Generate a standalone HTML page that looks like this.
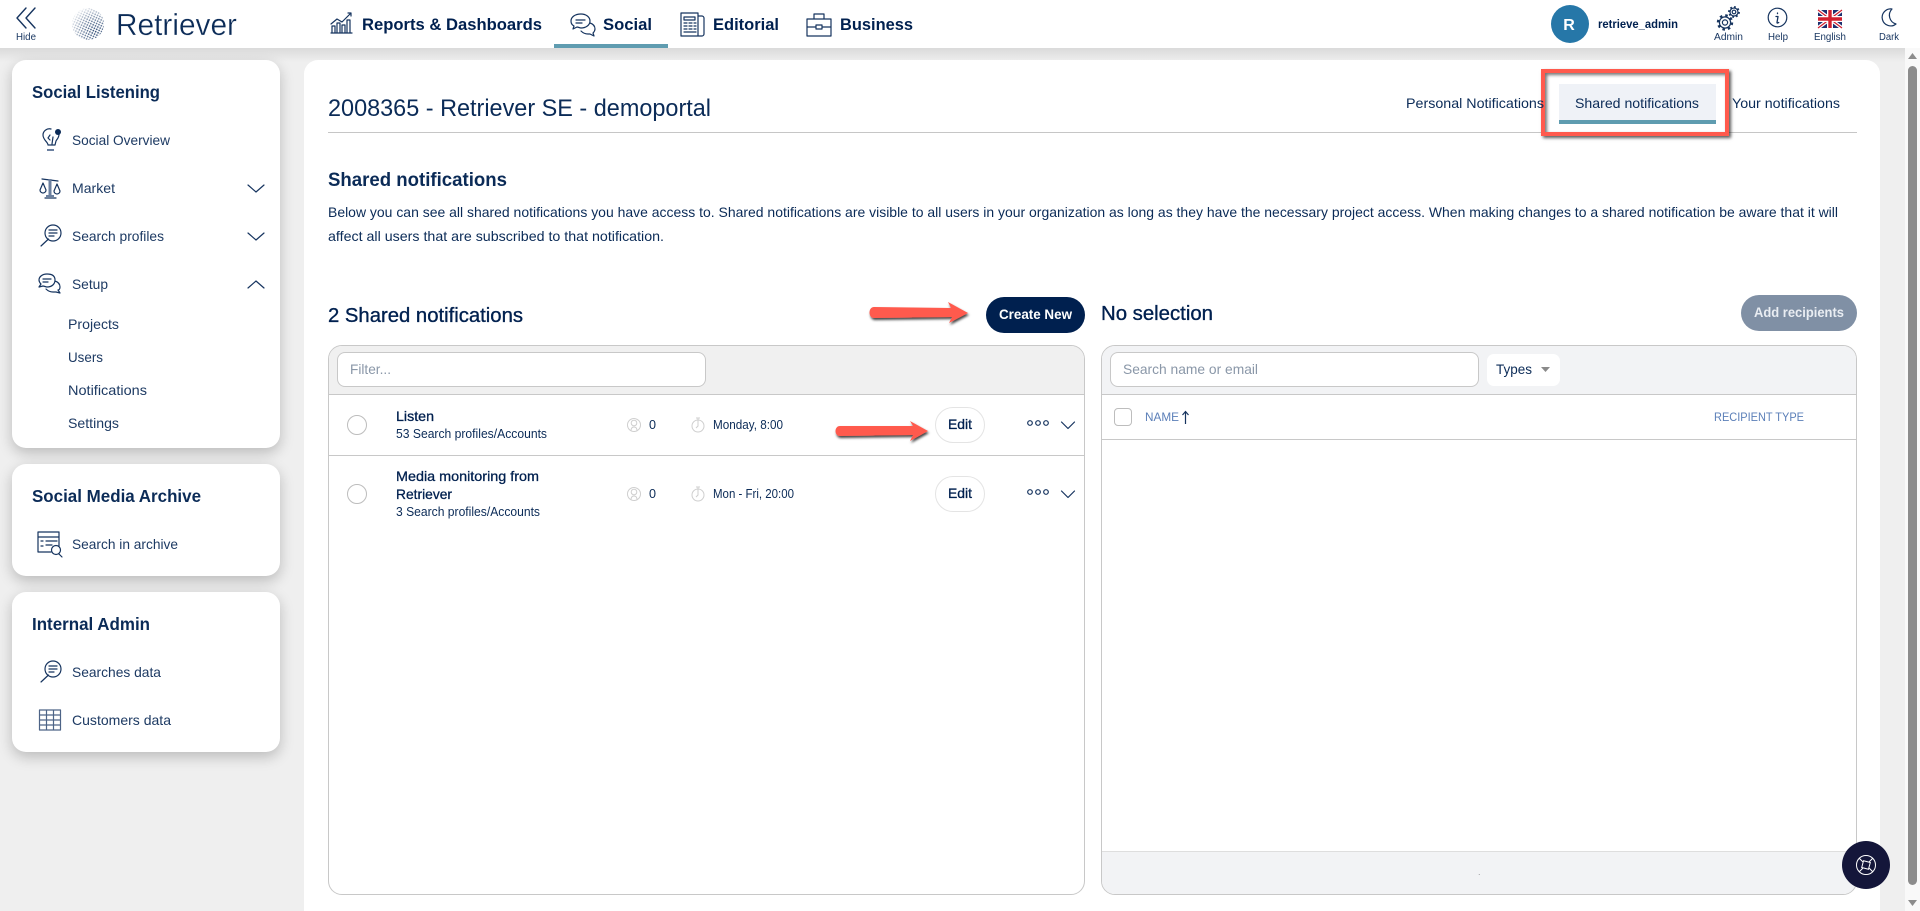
<!DOCTYPE html>
<html lang="en"><head><meta charset="utf-8"><title>Retriever</title>
<style>
html,body{margin:0;padding:0;width:1920px;height:911px;overflow:hidden;background:#efefef;font-family:"Liberation Sans",sans-serif}
#root{position:relative;width:1920px;height:911px;overflow:hidden}
.a{position:absolute;box-sizing:border-box}
.card{background:#fff;border-radius:14px;box-shadow:0 5px 14px rgba(0,0,0,.22);left:12px;width:268px}
svg{position:absolute;left:0;top:0}
text{font-family:"Liberation Sans",sans-serif}
.ic{fill:none;stroke:#16345f;stroke-width:1.2;stroke-linecap:round;stroke-linejoin:round}
</style></head><body><div id="root">
<div class="a" style="left:0;top:48px;width:1920px;height:14px;background:linear-gradient(#dadada,#efefef)"></div>
<div class="a" style="left:0;top:0;width:1920px;height:48px;background:#fff"></div>
<div class="a" style="left:554px;top:44px;width:114px;height:4px;background:#5f9cb0"></div>
<div class="a" style="left:1551px;top:5px;width:38px;height:38px;border-radius:50%;background:#2677a8"></div>
<div class="a card" style="top:60px;height:388px"></div>
<div class="a card" style="top:464px;height:112px"></div>
<div class="a card" style="top:592px;height:160px"></div>
<div class="a" style="left:304px;top:60px;width:1576px;height:851px;background:#fff;border-radius:14px 14px 0 0"></div>
<div class="a" style="left:328px;top:132px;width:1529px;height:1px;background:#c6c6c6"></div>
<div class="a" style="left:1559px;top:84px;width:157px;height:40px;background:#eff2f7;border-bottom:4px solid #5f9cb0"></div>
<div class="a" style="left:1541px;top:69px;width:188px;height:67px;border:4px solid #ff5a4d;box-shadow:2px 2px 3px rgba(0,0,0,.65),inset 2px 2px 3px rgba(0,0,0,.55)"></div>
<div class="a" style="left:328px;top:345px;width:757px;height:550px;border:1px solid #c8c8c8;border-radius:14px;overflow:hidden">
 <div class="a" style="left:0;top:0;width:755px;height:49px;background:#f0f0f0;border-bottom:1px solid #c8c8c8"></div>
 <div class="a" style="left:0;top:109px;width:755px;height:1px;background:#c8c8c8"></div>
</div>
<div class="a" style="left:337px;top:352px;width:369px;height:35px;background:#fff;border:1px solid #c8c8c8;border-radius:8px"></div>
<div class="a" style="left:347px;top:415px;width:20px;height:20px;border:1px solid #bdbdbd;border-radius:50%"></div>
<div class="a" style="left:347px;top:484px;width:20px;height:20px;border:1px solid #bdbdbd;border-radius:50%"></div>
<div class="a" style="left:935px;top:407px;width:50px;height:36px;background:#fff;border:1px solid #e4e4e4;border-radius:18px"></div>
<div class="a" style="left:935px;top:476px;width:50px;height:36px;background:#fff;border:1px solid #e4e4e4;border-radius:18px"></div>
<div class="a" style="left:986px;top:297px;width:99px;height:36px;background:#00204f;border-radius:18px"></div>
<div class="a" style="left:1741px;top:295px;width:116px;height:36px;background:#8090a5;border-radius:18px"></div>
<div class="a" style="left:1101px;top:345px;width:756px;height:550px;border:1px solid #c8c8c8;border-radius:14px;overflow:hidden">
 <div class="a" style="left:0;top:0;width:754px;height:49px;background:#f2f3f5;border-bottom:1px solid #c8c8c8"></div>
 <div class="a" style="left:0;top:93px;width:754px;height:1px;background:#c8c8c8"></div>
 <div class="a" style="left:0;top:505px;width:754px;height:43px;background:#f2f3f5;border-top:1px solid #dedede"></div>
</div>
<div class="a" style="left:1110px;top:352px;width:369px;height:35px;background:#fff;border:1px solid #c8c8c8;border-radius:8px"></div>
<div class="a" style="left:1487px;top:354px;width:73px;height:32px;background:#fff;border-radius:7px"></div>
<div class="a" style="left:1114px;top:408px;width:18px;height:18px;background:#fff;border:1px solid #bdbdbd;border-radius:4px"></div>
<div class="a" style="left:1905px;top:48px;width:15px;height:863px;background:#f9f9f9"></div>
<div class="a" style="left:1908px;top:66px;width:9px;height:819px;background:#8c8c8c;border-radius:5px"></div>
<div class="a" style="left:1842px;top:841px;width:48px;height:48px;border-radius:50%;background:#14163a"></div>

<svg width="1920" height="911" viewBox="0 0 1920 911" xmlns="http://www.w3.org/2000/svg">
<defs>
<pattern id="dots" width="2.600" height="2.600" patternUnits="userSpaceOnUse" patternTransform="rotate(25)"><circle cx="1.300" cy="1.300" r=".85" fill="#24426e"/></pattern>
<radialGradient id="fade" cx=".72" cy=".72" r=".85"><stop offset="0" stop-color="#fff"/><stop offset=".5" stop-color="#999"/><stop offset="1" stop-color="#080808"/></radialGradient>
<mask id="m"><circle cx="88" cy="24" r="16" fill="url(#fade)"/></mask>
<filter id="sh" x="-10%" y="-50%" width="120%" height="220%"><feDropShadow dx="1" dy="2" stdDeviation="1.2" flood-color="#000" flood-opacity=".75"/></filter>
</defs>

<!-- header -->
<path class="ic" d="M26 8 17 18l9 10M35 8 26 18l9 10" style="stroke-width:1.4"/>
<text x="16" y="40" font-size="10" fill="#16345f" textLength="20" lengthAdjust="spacingAndGlyphs">Hide</text>
<rect x="70" y="6" width="38" height="36" fill="url(#dots)" mask="url(#m)"/>
<text x="116" y="35" font-size="31" fill="#0b2b57" stroke="#fff" stroke-width=".35" textLength="121" lengthAdjust="spacingAndGlyphs">Retriever</text>

<g class="ic">
<path d="M331 33h21M332 33v-7h3v7M337 33v-10h3v10M342 33v-8h3v8M347 33v-13h3v13M331 24l6-5 5 3 9-9M348 13h3v3"/>
<path d="M581 14c-6 0-10 3-10 7 0 2 1 4 3 5l-1 3 4-2c1 0 3 1 4 1 5 0 9-3 9-7s-4-7-9-7zM576 20h9M576 23h6M590 23c3 1 5 3 5 6 0 2-1 3-2 4l1 3-4-2-2 0c-3 0-5-1-7-3"/>
<path d="M681 13h17v23h-17zM698 16h4c1 0 2 1 2 2v16c0 1-1 2-2 2h-4M684 17h11v3h-11zM684 23h3M689 23h3M694 23h2M684 26h3M689 26h3M694 26h2M684 29h3M689 29h3M694 29h2M684 32h12"/>
<path d="M807 19h24v17h-24zM814 19v-5h10v5M807 27h9M822 27h9M816 25h6v4h-6z"/>
<circle cx="1725" cy="22.500" r="2.600"/>
<circle cx="1725" cy="22.500" r="5.600"/>
<circle cx="1725" cy="22.500" r="7" style="stroke-width:2.400;stroke-dasharray:2.500 3;stroke-linecap:butt"/>
<circle cx="1734" cy="12" r="1.800"/>
<circle cx="1734" cy="12" r="4"/>
<circle cx="1734" cy="12" r="5" style="stroke-width:1.800;stroke-dasharray:1.800 2.100;stroke-linecap:butt"/>
<circle cx="1777.500" cy="17.500" r="9.300"/>
<path d="M1777.500 13v.6M1776 16.500h2l-1 6 .2.6 1.500-.6" style="stroke-width:1.300"/>
<path d="M1892 9a8.500 8.500 0 1 0 4 15 9 9 0 0 1-4-15z"/>
</g>
<rect x="1818" y="10" width="24" height="18" fill="#1d2f6f"/>
<path d="M1818 10l24 18M1842 10l-24 18" stroke="#fff" stroke-width="3.600"/>
<path d="M1818 10l24 18M1842 10l-24 18" stroke="#d2202f" stroke-width="1.200"/>
<path d="M1830 10v18M1818 19h24" stroke="#fff" stroke-width="6"/>
<path d="M1830 10v18M1818 19h24" stroke="#d2202f" stroke-width="3.400"/>

<g font-size="16.500" font-weight="700" fill="#00204f">
<text x="362" y="30" textLength="180" lengthAdjust="spacingAndGlyphs">Reports &amp; Dashboards</text>
<text x="603" y="30" textLength="49" lengthAdjust="spacingAndGlyphs">Social</text>
<text x="713" y="30" textLength="66" lengthAdjust="spacingAndGlyphs">Editorial</text>
<text x="840" y="30" textLength="73" lengthAdjust="spacingAndGlyphs">Business</text>
</g>
<text x="1569" y="30" font-size="16" font-weight="700" fill="#fff" text-anchor="middle">R</text>
<text x="1598" y="28" font-size="11.500" font-weight="700" fill="#00204f" textLength="80" lengthAdjust="spacingAndGlyphs">retrieve_admin</text>
<g font-size="10" fill="#16345f">
<text x="1714" y="40" textLength="29" lengthAdjust="spacingAndGlyphs">Admin</text>
<text x="1768" y="40" textLength="20" lengthAdjust="spacingAndGlyphs">Help</text>
<text x="1814" y="40" textLength="32" lengthAdjust="spacingAndGlyphs">English</text>
<text x="1879" y="40" textLength="20" lengthAdjust="spacingAndGlyphs">Dark</text>
</g>

<!-- sidebar -->
<g font-size="17.500" font-weight="700" fill="#0b2b57">
<text x="32" y="98" textLength="128" lengthAdjust="spacingAndGlyphs">Social Listening</text>
<text x="32" y="502" textLength="169" lengthAdjust="spacingAndGlyphs">Social Media Archive</text>
<text x="32" y="630" textLength="118" lengthAdjust="spacingAndGlyphs">Internal Admin</text>
</g>
<g font-size="14" fill="#1d3a63">
<text x="72" y="145" textLength="98" lengthAdjust="spacingAndGlyphs">Social Overview</text>
<text x="72" y="193" textLength="43" lengthAdjust="spacingAndGlyphs">Market</text>
<text x="72" y="241" textLength="92" lengthAdjust="spacingAndGlyphs">Search profiles</text>
<text x="72" y="289" textLength="36" lengthAdjust="spacingAndGlyphs">Setup</text>
<text x="68" y="329" textLength="51" lengthAdjust="spacingAndGlyphs">Projects</text>
<text x="68" y="362" textLength="35" lengthAdjust="spacingAndGlyphs">Users</text>
<text x="68" y="395" textLength="79" lengthAdjust="spacingAndGlyphs">Notifications</text>
<text x="68" y="428" textLength="51" lengthAdjust="spacingAndGlyphs">Settings</text>
<text x="72" y="549" textLength="106" lengthAdjust="spacingAndGlyphs">Search in archive</text>
<text x="72" y="677" textLength="89" lengthAdjust="spacingAndGlyphs">Searches data</text>
<text x="72" y="725" textLength="99" lengthAdjust="spacingAndGlyphs">Customers data</text>
</g>
<g class="ic">
<path d="M248 185l8 7 8-7M248 233l8 7 8-7M248 288l8-7 8 7"/>
<path d="M48 145c0-3-5-5-5-10 0-4 4-7 8-6M55 145l1-4c1-2 3-3 3-7M48 145h7M50 135l-2 3 2 2M53 137l-1 7"/>
<path d="M40 190l3-7 3 7a3 3 0 0 1-6 0zM54 191l3-7 3 7a3 3 0 0 1-6 0zM42 179l8 1 8 1M45 198h11"/>
<path d="M41 246l7.500-7"/>
<circle cx="53" cy="233" r="8"/>
<path d="M49 230h8M49 233h8M49 236h5"/>
<path d="M47 274c-5 0-8 3-8 6 0 2 1 3 2 4l-2 3 4-1c1 0 3 1 4 1 5 0 8-3 8-7s-3-6-8-6zM43 279h8M43 282h5M55 281c3 1 5 3 5 6 0 2-1 3-2 3l2 3-4-1h-3c-3 0-5-1-7-3"/>
<path d="M38 532h21v14M38 532v20h13M38 537h21M46 541h11M46 545h6M41 541h2M41 546h2"/>
<circle cx="56" cy="550" r="4.500"/><path d="M59 554l3 3"/>
<path d="M41 682l7.500-7"/>
<circle cx="53" cy="669" r="8"/>
<path d="M49 666h8M49 669h8M49 672h5"/>
<path d="M39.500 710h21v20h-21zM39.500 715h21M39.500 720h21M39.500 725h21M46.500 710v20M53.500 710v20" stroke="#4d6487"/>
</g>
<path d="M50 179v18" stroke="#6b80a0" stroke-width="3"/>
<path d="M46 197h8v-2h-8zM47 151h7v-2h-7z" fill="#6b80a0"/>
<circle cx="58" cy="132" r="3" fill="#0b2b57"/>

<!-- content -->
<text x="328" y="116" font-size="24" fill="#0b2b57" textLength="383" lengthAdjust="spacingAndGlyphs">2008365 - Retriever SE - demoportal</text>
<g font-size="14" fill="#0b2b57">
<text x="1406" y="108" textLength="138" lengthAdjust="spacingAndGlyphs">Personal Notifications</text>
<text x="1575" y="108" textLength="124" lengthAdjust="spacingAndGlyphs">Shared notifications</text>
<text x="1732" y="108" textLength="108" lengthAdjust="spacingAndGlyphs">Your notifications</text>
</g>
<text x="328" y="186" font-size="19.500" font-weight="700" fill="#0b2b57" textLength="179" lengthAdjust="spacingAndGlyphs">Shared notifications</text>
<g font-size="14" fill="#0b2b57">
<text x="328" y="217" textLength="1510" lengthAdjust="spacingAndGlyphs">Below you can see all shared notifications you have access to. Shared notifications are visible to all users in your organization as long as they have the necessary project access. When making changes to a shared notification be aware that it will</text>
<text x="328" y="241" textLength="336" lengthAdjust="spacingAndGlyphs">affect all users that are subscribed to that notification.</text>
</g>
<text x="328" y="322" font-size="20" font-weight="400" fill="#00204f" stroke="#00204f" stroke-width=".35" textLength="195" lengthAdjust="spacingAndGlyphs">2 Shared notifications</text>
<text x="1101" y="320" font-size="20" fill="#00204f" stroke="#00204f" stroke-width=".35" textLength="112" lengthAdjust="spacingAndGlyphs">No selection</text>
<text x="999" y="319" font-size="14" font-weight="700" fill="#fff" textLength="73" lengthAdjust="spacingAndGlyphs">Create New</text>
<text x="1754" y="317" font-size="14" font-weight="700" fill="#e9edf2" textLength="90" lengthAdjust="spacingAndGlyphs">Add recipients</text>

<text x="350" y="374" font-size="14" fill="#8a97a8" textLength="41" lengthAdjust="spacingAndGlyphs">Filter...</text>
<text x="1123" y="374" font-size="14" fill="#8a97a8" textLength="135" lengthAdjust="spacingAndGlyphs">Search name or email</text>
<text x="1496" y="374" font-size="14" fill="#0b2b57" textLength="36" lengthAdjust="spacingAndGlyphs">Types</text>
<path d="M1541 367h9l-4.500 5z" fill="#8a8a8a"/>
<g font-size="12" fill="#5b7fb8">
<text x="1145" y="421" textLength="34" lengthAdjust="spacingAndGlyphs">NAME</text>
<text x="1714" y="421" textLength="90" lengthAdjust="spacingAndGlyphs">RECIPIENT TYPE</text>
</g>
<path d="M1185.500 424v-12M1182.500 415l3-3.500 3 3.500" fill="none" stroke="#16345f" stroke-width="1.200"/>

<g font-size="14" fill="#00204f">
<text x="396" y="421" font-weight="400" stroke="#00204f" stroke-width=".3" textLength="38" lengthAdjust="spacingAndGlyphs">Listen</text>
<text x="396" y="481" stroke="#00204f" stroke-width=".3" textLength="143" lengthAdjust="spacingAndGlyphs">Media monitoring from</text>
<text x="396" y="499" stroke="#00204f" stroke-width=".3" textLength="56" lengthAdjust="spacingAndGlyphs">Retriever</text>
</g>
<g font-size="12.500" fill="#0b2b57">
<text x="396" y="438" textLength="151" lengthAdjust="spacingAndGlyphs">53 Search profiles/Accounts</text>
<text x="396" y="516" textLength="144" lengthAdjust="spacingAndGlyphs">3 Search profiles/Accounts</text>
<text x="649" y="429" textLength="7" lengthAdjust="spacingAndGlyphs">0</text>
<text x="649" y="498" textLength="7" lengthAdjust="spacingAndGlyphs">0</text>
<text x="713" y="429" textLength="70" lengthAdjust="spacingAndGlyphs">Monday, 8:00</text>
<text x="713" y="498" textLength="81" lengthAdjust="spacingAndGlyphs">Mon - Fri, 20:00</text>
</g>
<g fill="none" stroke="#cfcfcf" stroke-width="1">
<circle cx="634" cy="425" r="6.500"/><circle cx="634" cy="423" r="2.800"/><path d="M631 431c0-3 1-4 3-4s3 1 3 4"/>
<circle cx="634" cy="494" r="6.500"/><circle cx="634" cy="492" r="2.800"/><path d="M631 500c0-3 1-4 3-4s3 1 3 4"/>
<circle cx="698" cy="426" r="6"/><path d="M698 418v8l-2 2M696 418h4"/>
<circle cx="698" cy="495" r="6"/><path d="M698 487v8l-2 2M696 487h4"/>
</g>
<g fill="#00204f" font-size="14" font-weight="400">
<text x="948" y="429" stroke="#00204f" stroke-width=".3" textLength="24" lengthAdjust="spacingAndGlyphs">Edit</text>
<text x="948" y="498" stroke="#00204f" stroke-width=".3" textLength="24" lengthAdjust="spacingAndGlyphs">Edit</text>
</g>
<g class="ic">
<circle cx="1030" cy="423" r="2.300"/><circle cx="1038" cy="423" r="2.300"/><circle cx="1046" cy="423" r="2.300"/>
<circle cx="1030" cy="492" r="2.300"/><circle cx="1038" cy="492" r="2.300"/><circle cx="1046" cy="492" r="2.300"/>
<path d="M1061.500 422l6.500 6.500 6.500-6.500M1061.500 491l6.500 6.500 6.500-6.500"/>
</g>

<!-- arrows -->
<g fill="#ff5a4d" filter="url(#sh)">
<path d="M874 307l77 1-3-6 20 11-19 10 3-6-78 1c-6 0-6-11 0-11z"/>
<path d="M840 426l73 0-3-5 18 10-18 10 3-6-73 1c-6 0-6-10 0-10z"/>
</g>

<!-- scrollbar arrows / chat -->
<path d="M1908 59h9l-4.500-6zM1908 900h9l-4.500 6z" fill="#8c8c8c"/>
<g fill="none" stroke="#fff" stroke-width="1">
<circle cx="1866" cy="865" r="9.500"/><rect x="1862.500" y="861.500" width="7" height="7" transform="rotate(15 1866 865)"/>
<path d="M1859 858l4 4M1873 858l-4 4M1859 872l4-4M1873 872l-4-4"/>
</g>
<text x="1478" y="875" font-size="9" fill="#999">.</text>
</svg>
</div></body></html>
